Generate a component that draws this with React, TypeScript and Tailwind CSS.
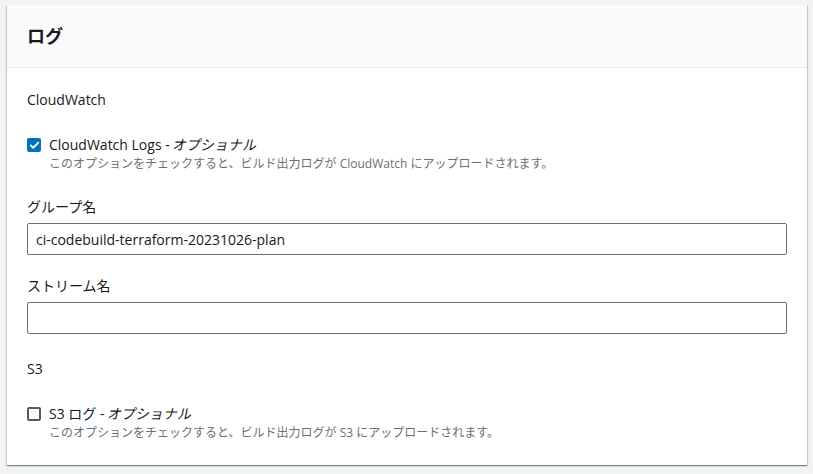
import { Check } from "lucide-react";

const font = {
  fontFamily: '"Open Sans", "Noto Sans CJK JP", sans-serif',
};

function Checkbox({ checked, label, desc }: { checked: boolean; label: string; desc: string }) {
  return (
    <div className="flex gap-2">
      <div className="pt-[4px]">
        {checked ? (
          <div className="flex h-[14px] w-[14px] items-center justify-center rounded-[2px] bg-[#0073bb]">
            <Check className="h-[11px] w-[11px] text-white" strokeWidth={4} />
          </div>
        ) : (
          <div className="h-[14px] w-[14px] rounded-[2px] border-2 border-[#545b64] bg-white" />
        )}
      </div>
      <div className="flex flex-col">
        <span className="text-[14px] leading-[22px] text-[#16191f]">
          {label} - <span className="inline-block -skew-x-[12deg]">オプショナル</span>
        </span>
        <span className="text-[12px] leading-[16px] text-[#687078]">{desc}</span>
      </div>
    </div>
  );
}

function Field({ label, value }: { label: string; value: string }) {
  return (
    <div className="flex flex-col gap-[5px]">
      <span className="text-[14px] leading-[22px] text-[#16191f]">{label}</span>
      <div className="flex h-[32px] items-center rounded-[2px] border border-[#687078] bg-white px-[8px] text-[14px] text-[#16191f]">
        {value}
      </div>
    </div>
  );
}

export default function App() {
  return (
    <div className="min-h-[474px] bg-[#f2f3f3] pl-[7px] pt-[5px]" style={font}>
      <div className="w-[800px] bg-white shadow-[0_1px_1px_0_rgba(0,28,36,0.3),1px_1px_1px_0_rgba(0,28,36,0.15),-1px_1px_1px_0_rgba(0,28,36,0.15)]">
        <div className="flex h-[63px] items-center border-b border-[#eaeded] bg-[#fafafa] px-[20px]">
          <h2 className="text-[18px] font-bold text-[#16191f]">ログ</h2>
        </div>
        <div className="flex flex-col px-[20px] pb-[24px] pt-[21px]">
          <span className="text-[14px] leading-[22px] text-[#16191f]">CloudWatch</span>
          <div className="mt-[23px]">
            <Checkbox
              checked
              label="CloudWatch Logs"
              desc="このオプションをチェックすると、ビルド出力ログが CloudWatch にアップロードされます。"
            />
          </div>
          <div className="mt-[24px]">
            <Field label="グループ名" value="ci-codebuild-terraform-20231026-plan" />
          </div>
          <div className="mt-[20px]">
            <Field label="ストリーム名" value="" />
          </div>
          <span className="mt-[24px] text-[14px] leading-[22px] text-[#16191f]">S3</span>
          <div className="mt-[23px]">
            <Checkbox
              checked={false}
              label="S3 ログ"
              desc="このオプションをチェックすると、ビルド出力ログが S3 にアップロードされます。"
            />
          </div>
        </div>
      </div>
    </div>
  );
}
